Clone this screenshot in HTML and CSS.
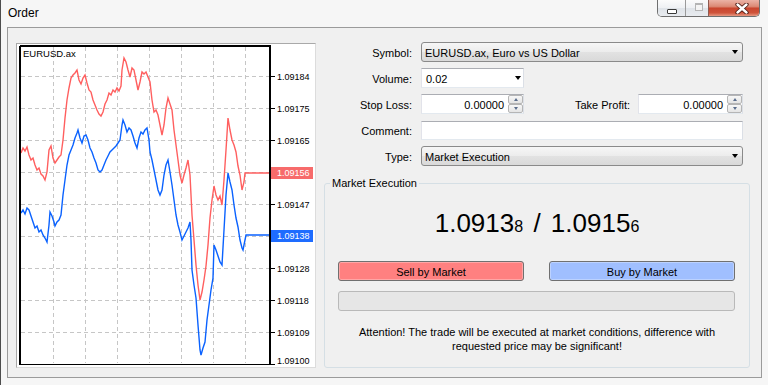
FILE: index.html
```html
<!DOCTYPE html>
<html>
<head>
<meta charset="utf-8">
<title>Order</title>
<link rel="stylesheet" href="styles.css">
</head>
<body>
<div class="window">
  <div class="titlebar">
    <div class="title">Order</div>
    <div class="caption-buttons">
      <div class="cbtn cbtn-min"><span class="min-icon"></span></div>
      <div class="cbtn cbtn-max"><span class="max-icon"></span></div>
      <div class="cbtn cbtn-close">
        <svg class="close-icon" width="14" height="11" viewBox="0 0 14 11">
          <path d="M2.5 1.5 L11.5 9.5 M11.5 1.5 L2.5 9.5" stroke="#4a1a12" stroke-width="4.2" stroke-linecap="round" fill="none"/>
          <path d="M2.5 1.5 L11.5 9.5 M11.5 1.5 L2.5 9.5" stroke="#ffffff" stroke-width="2.4" stroke-linecap="round" fill="none"/>
        </svg>
      </div>
    </div>
  </div>

  <div class="client">
    <div class="chart-panel">
      <svg class="chart" width="298" height="323" viewBox="17 44 298 323">
        <g class="grid" stroke="#c6c6c6" stroke-width="1" stroke-dasharray="4 3" shape-rendering="crispEdges">
          <line x1="21" y1="76.5" x2="269" y2="76.5"/>
          <line x1="21" y1="108.5" x2="269" y2="108.5"/>
          <line x1="21" y1="140.5" x2="269" y2="140.5"/>
          <line x1="21" y1="172.5" x2="269" y2="172.5"/>
          <line x1="21" y1="204.5" x2="269" y2="204.5"/>
          <line x1="21" y1="236.5" x2="269" y2="236.5"/>
          <line x1="21" y1="268.5" x2="269" y2="268.5"/>
          <line x1="21" y1="300.5" x2="269" y2="300.5"/>
          <line x1="21" y1="332.5" x2="269" y2="332.5"/>
          <line x1="53.5" y1="47" x2="53.5" y2="363"/>
          <line x1="85.5" y1="47" x2="85.5" y2="363"/>
          <line x1="117.5" y1="47" x2="117.5" y2="363"/>
          <line x1="149.5" y1="47" x2="149.5" y2="363"/>
          <line x1="181.5" y1="47" x2="181.5" y2="363"/>
          <line x1="213.5" y1="47" x2="213.5" y2="363"/>
          <line x1="245.5" y1="47" x2="245.5" y2="363"/>
        </g>

        <polyline fill="none" stroke="#ff5f5f" stroke-width="1.4" stroke-linejoin="miter"
          points="21,153 23,148 25,151 27,147 29,155 31,160 33,158 35,165 37,170 39,168 41,174 43,176 45,180 47,172 49,150 51,146 53,158 55,163 57,160 59,157 61,155 63,140 65,118 67,100 69,88 71,78 73,75 75,73 77,70 79,80 81,84 83,78 85,75 87,83 89,90 91,92 93,100 95,105 97,110 99,114 101,116 103,112 105,104 107,100 109,93 111,95 113,90 115,92 117,88 119,91 121,86 122,70 124,58 126,62 128,70 130,77 132,68 134,70 136,80 138,90 140,82 142,72 144,74 146,72 148,77 150,82 152,100 154,112 156,110 158,115 160,125 162,135 164,125 166,108 168,98 170,104 172,110 174,130 176,145 178,160 180,175 182,183 184,175 186,168 188,160 190,175 192,215 194,240 196,265 198,285 200,300 202,292 204,280 206,266 208,245 210,218 212,200 214,186 216,195 218,200 220,196 222,205 224,180 226,150 228,118 230,130 232,140 234,145 236,152 238,166 240,175 242,190 244,182 245,173 270,173"/>
        <polyline fill="none" stroke="#0a62ff" stroke-width="1.4" stroke-linejoin="miter"
          points="21,213 23,210 25,214 27,208 29,210 31,216 33,222 35,228 37,226 39,232 41,230 43,235 45,238 47,242 49,225 50,212 52,216 54,222 55,226 57,222 59,220 61,215 63,195 65,180 67,165 69,155 71,150 73,145 75,138 77,133 78,130 80,138 82,143 84,136 86,135 88,140 90,148 92,152 94,158 96,163 98,170 100,172 102,170 104,165 106,160 108,156 110,152 112,150 114,148 116,146 118,143 120,140 122,125 123,120 125,125 127,132 129,128 131,130 133,136 135,143 137,148 139,138 141,132 143,134 145,130 147,128 149,140 150,152 152,160 154,170 156,180 158,190 160,195 162,190 164,175 166,165 168,160 170,172 172,185 174,200 176,215 178,225 180,232 182,240 184,236 186,232 188,228 190,222 191,240 192,270 194,285 196,298 198,325 200,350 201,355 203,348 205,342 207,320 209,305 211,290 213,278 214,245 216,250 218,256 220,262 222,265 224,230 226,195 228,173 230,182 232,190 234,205 236,218 238,227 240,240 242,248 243,250 245,240 246,235 270,235"/>

        <g stroke="#000" stroke-width="1.8" fill="none" shape-rendering="crispEdges">
          <line x1="20" y1="46" x2="271" y2="46"/>
          <line x1="20" y1="46" x2="20" y2="365"/>
          <line x1="20" y1="364.5" x2="271" y2="364.5"/>
          <line x1="270" y1="46" x2="270" y2="365"/>
        </g>
        <g stroke="#000" stroke-width="1" shape-rendering="crispEdges">
          <line x1="271" y1="76.5" x2="275" y2="76.5"/>
          <line x1="271" y1="108.5" x2="275" y2="108.5"/>
          <line x1="271" y1="140.5" x2="275" y2="140.5"/>
          <line x1="271" y1="204.5" x2="275" y2="204.5"/>
          <line x1="271" y1="268.5" x2="275" y2="268.5"/>
          <line x1="271" y1="300.5" x2="275" y2="300.5"/>
          <line x1="271" y1="332.5" x2="275" y2="332.5"/>
          <line x1="271" y1="364" x2="275" y2="364"/>
        </g>

        <text class="sym" x="23" y="56.5">EURUSD.ax</text>

        <g class="axis">
          <text x="277" y="79.8">1.09184</text>
          <text x="277" y="111.8">1.09175</text>
          <text x="277" y="143.8">1.09165</text>
          <text x="277" y="207.8">1.09147</text>
          <text x="277" y="271.8">1.09128</text>
          <text x="277" y="303.8">1.09118</text>
          <text x="277" y="335.8">1.09109</text>
          <text x="277" y="364.3">1.09100</text>
        </g>

        <rect x="271" y="167" width="42" height="12" fill="#f76b6b"/>
        <text class="tag" x="277" y="176.3">1.09156</text>
        <rect x="271" y="230" width="42" height="12" fill="#1e6cff"/>
        <text class="tag" x="277" y="239.3">1.09138</text>
      </svg>
    </div>

    <div class="form">
      <div class="row">
        <span class="lbl">Symbol:</span>
        <div class="combo combo-wide"><span class="val">EURUSD.ax, Euro vs US Dollar</span><i class="arrow"></i></div>
      </div>
      <div class="row">
        <span class="lbl">Volume:</span>
        <div class="textbox volume"><span class="val">0.02</span><i class="arrow"></i></div>
      </div>
      <div class="row">
        <span class="lbl">Stop Loss:</span>
        <div class="textbox spin sl">
          <span class="num">0.00000</span>
          <div class="spinner"><span class="sp-up"><i></i></span><span class="sp-down"><i></i></span></div>
        </div>
        <span class="lbl2">Take Profit:</span>
        <div class="textbox spin tp">
          <span class="num">0.00000</span>
          <div class="spinner"><span class="sp-up"><i></i></span><span class="sp-down"><i></i></span></div>
        </div>
      </div>
      <div class="row">
        <span class="lbl">Comment:</span>
        <div class="textbox comment"></div>
      </div>
      <div class="row">
        <span class="lbl">Type:</span>
        <div class="combo combo-wide"><span class="val">Market Execution</span><i class="arrow"></i></div>
      </div>

      <fieldset class="group">
        <legend>Market Execution</legend>
        <div class="price">1.0913<span class="small">8</span> <span class="slash">/</span> 1.0915<span class="small">6</span></div>
        <div class="actions">
          <div class="btn sell">Sell by Market</div>
          <div class="btn buy">Buy by Market</div>
        </div>
        <div class="progress"></div>
        <p class="note">Attention! The trade will be executed at market conditions, difference with<br>requested price may be significant!</p>
      </fieldset>
    </div>
  </div>
</div>
</body>
</html>
```

FILE: styles.css
```css
html, body {
  margin: 0;
  padding: 0;
}

body {
  width: 768px;
  height: 385px;
  overflow: hidden;
  background: #f6f6f6;
  font-family: "Liberation Sans", Arial, sans-serif;
  font-size: 11px;
  color: #000;
}

.window {
  width: 768px;
  height: 385px;
  box-shadow: inset 1px 0 0 #4d4d4d;
}

/* ---------- title bar ---------- */
.titlebar {
  height: 27px;
  display: flex;
  justify-content: space-between;
  align-items: flex-start;
}

.title {
  padding: 6px 0 0 8px;
  font-size: 12px;
  line-height: 15px;
  color: #000;
}

.caption-buttons {
  display: flex;
  height: 17px;
  margin-right: 8px;
  border: 1px solid #6f6f6f;
  border-top: none;
  border-radius: 0 0 5px 5px;
  overflow: hidden;
  box-sizing: border-box;
}

.cbtn {
  height: 16px;
  display: flex;
  align-items: center;
  justify-content: center;
  box-sizing: border-box;
}

.cbtn-min {
  width: 28px;
  background: linear-gradient(#fbfbfb, #eef0f3 50%, #dfe3e8 51%, #e8ebef);
  border-right: 1px solid #9a9a9a;
}

.cbtn-max {
  width: 23px;
  background: linear-gradient(#fbfbfb, #eef0f3 50%, #dfe3e8 51%, #e8ebef);
  border-right: 1px solid #8d5a50;
}

.cbtn-close {
  width: 50px;
  padding-left: 16px;
  background: linear-gradient(#ebb3a6 0%, #dc8a76 40%, #c9462f 52%, #cf533a 80%, #e69a84 100%);
}

.min-icon {
  width: 8px;
  height: 3px;
  margin-top: 6px;
  background: #fff;
  border: 1px solid #3a3a3a;
  border-radius: 1px;
}

.max-icon {
  width: 6px;
  height: 5px;
  margin-left: 4px;
  margin-bottom: 3px;
  border: 1px solid #b4b4b4;
  border-top-width: 2px;
  background: #f4f4f4;
}

.close-icon {
  display: block;
}

/* ---------- client area ---------- */
.client {
  margin: 0 6px 0 7px;
  height: 351px;
  box-sizing: border-box;
  border: 1px solid #9b9b9b;
  background: #f0f0f0;
  padding: 14px 11px 9px 8px;
  display: flex;
  gap: 8px;
}

.chart-panel {
  width: 300px;
  height: 325px;
  margin-top: 1px;
  box-sizing: border-box;
  border: 1px solid;
  border-color: #a9a9a9 #dcdcdc #dcdcdc #a9a9a9;
  background: #fff;
  flex: none;
}

.chart {
  display: block;
}

.chart .sym {
  font-family: "Liberation Sans", Arial, sans-serif;
  font-size: 9.5px;
  fill: #000;
}

.chart .axis text {
  font-family: "Liberation Sans", Arial, sans-serif;
  font-size: 9px;
  fill: #000;
}

.chart .tag {
  font-family: "Liberation Sans", Arial, sans-serif;
  font-size: 9px;
  fill: #fff;
}

/* ---------- form ---------- */
.form {
  width: 426px;
  display: flex;
  flex-direction: column;
  gap: 6px;
}

.row {
  display: flex;
  align-items: center;
  height: 20px;
  padding-right: 7px;
}

.lbl {
  width: 88px;
  margin-right: 9px;
  text-align: right;
  line-height: 20px;
  padding-top: 1px;
  flex: none;
}

.lbl2 {
  flex: 1;
  text-align: right;
  margin-right: 8px;
  line-height: 20px;
  padding-top: 1px;
}

.combo,
.textbox {
  height: 20px;
  box-sizing: border-box;
  display: flex;
  align-items: center;
  line-height: 18px;
}

.combo {
  border: 1px solid #8a8a8a;
  border-radius: 3px;
  background: linear-gradient(#f6f6f6, #ececec 50%, #e2e2e2 51%, #d9d9d9);
  padding-left: 3px;
}

.combo-wide {
  flex: 1;
}

.val {
  flex: 1;
  padding-top: 1px;
}

.arrow {
  width: 0;
  height: 0;
  border-left: 3.5px solid transparent;
  border-right: 3.5px solid transparent;
  border-top: 4px solid #000;
  margin-right: 4px;
}

.textbox {
  background: #fff;
  border: 1px solid;
  border-color: #abadb3 #dbdfe6 #e3e9ef #e2e3ea;
  padding-left: 4px;
}

.volume {
  width: 103px;
}

.volume .arrow {
  margin-right: 2px;
}

.comment {
  flex: 1;
  height: 19px;
}

.spin {
  padding-left: 0;
}

.sl {
  width: 103px;
}

.tp {
  width: 105px;
}

.num {
  flex: 1;
  text-align: right;
  padding-right: 4px;
  padding-top: 1px;
}

.spinner {
  width: 15px;
  height: 18px;
  display: flex;
  flex-direction: column;
  flex: none;
}

.spinner span {
  flex: 1;
  display: flex;
  align-items: center;
  justify-content: center;
  box-sizing: border-box;
  border: 1px solid #b5b5b5;
  border-radius: 2px;
  background: linear-gradient(#f7f7f7, #e4e4e4);
}

.sp-up i {
  width: 0;
  height: 0;
  border-left: 2.5px solid transparent;
  border-right: 2.5px solid transparent;
  border-bottom: 3px solid #5a6d8c;
}

.sp-down i {
  width: 0;
  height: 0;
  border-left: 2.5px solid transparent;
  border-right: 2.5px solid transparent;
  border-top: 3px solid #5a6d8c;
}

/* ---------- group box ---------- */
.group {
  flex: 1;
  margin: 4px 0 0 0;
  padding: 0;
  border: 1px solid #d5dfe5;
  border-radius: 3px;
  min-width: 0;
}

.group legend {
  margin-left: 5px;
  padding: 0 2px;
  line-height: 14px;
}

.price {
  margin-top: 18px;
  text-align: center;
  font-size: 26px;
  line-height: 30px;
  word-spacing: 3px;
}

.price .small {
  font-size: 16px;
}

.actions {
  display: flex;
  justify-content: space-between;
  margin-top: 19px;
  padding: 0 14px 0 13px;
}

.btn {
  width: 186px;
  height: 20px;
  box-sizing: border-box;
  border: 1px solid #707070;
  border-radius: 3px;
  text-align: center;
  line-height: 18px;
  padding-top: 1px;
  box-shadow: inset 0 0 0 1px rgba(255, 255, 255, 0.3);
}

.sell {
  background: #ff8080;
}

.buy {
  background: #a0bfff;
}

.progress {
  margin: 10px 14px 0 13px;
  height: 20px;
  box-sizing: border-box;
  border: 1px solid #b9b9b9;
  border-radius: 3px;
  background: #e6e6e6;
}

.note {
  margin: 14px 0 0 0;
  text-align: center;
  line-height: 14px;
}
```
